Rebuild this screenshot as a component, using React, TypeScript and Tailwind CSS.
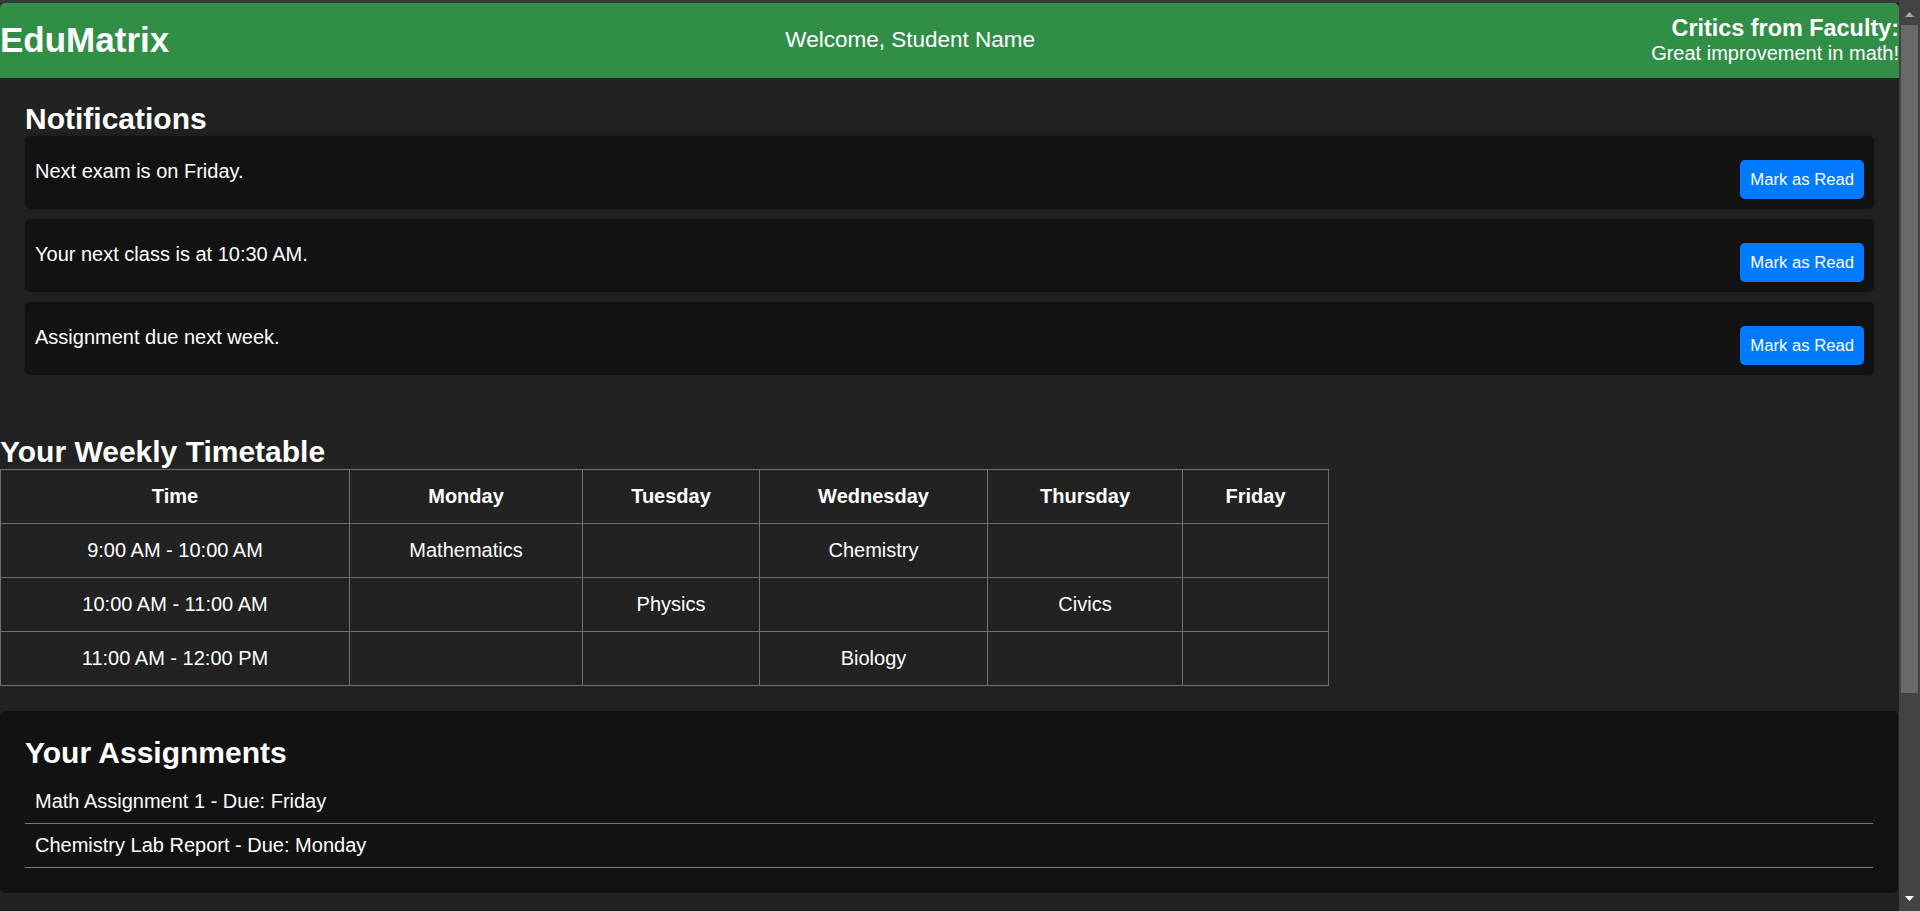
import React from 'react';

const NOTIFICATIONS = ['Next exam is on Friday.', 'Your next class is at 10:30 AM.', 'Assignment due next week.'];

const DAYS = ['Monday', 'Tuesday', 'Wednesday', 'Thursday', 'Friday'];

const ROWS = [
  { time: '9:00 AM - 10:00 AM', cells: ['Mathematics', '', 'Chemistry', '', ''] },
  { time: '10:00 AM - 11:00 AM', cells: ['', 'Physics', '', 'Civics', ''] },
  { time: '11:00 AM - 12:00 PM', cells: ['', '', 'Biology', '', ''] },
];

const ASSIGNMENTS = ['Math Assignment 1 - Due: Friday', 'Chemistry Lab Report - Due: Monday'];

function Scrollbar() {
  return (
    <div className="flex w-[21px] shrink-0 flex-col bg-[#434343]">
      <div className="flex h-[25px] items-center justify-center pt-[4px]">
        <svg width="9" height="5" viewBox="0 0 9 5">
          <path d="M0 5 L4.5 0 L9 5 Z" fill="#a8a8a8" />
        </svg>
      </div>
      <div className="mx-[2px] h-[668px] bg-[#696969]" />
      <div className="flex-1" />
      <div className="flex h-[22px] items-center justify-center pb-[4px]">
        <svg width="9" height="5" viewBox="0 0 9 5">
          <path d="M0 0 L9 0 L4.5 5 Z" fill="#ffffff" />
        </svg>
      </div>
    </div>
  );
}

export default function App() {
  return (
    <div className="flex h-[911px] w-[1920px] overflow-hidden bg-[#222222] font-['Liberation_Sans',Arial,sans-serif] leading-[1.15] text-white">
      <div className="flex min-w-0 flex-1 flex-col">
        <div className="h-[3px] shrink-0 bg-[#393939]" />

        {/* header */}
        <header className="flex items-center justify-between rounded-t-[5px] bg-[#318e47] py-[12.4px]">
          <h1 className="text-[35px] font-bold">EduMatrix</h1>
          <p className="text-[22.5px]">Welcome, Student Name</p>
          <div className="text-right">
            <h3 className="text-[23.4px] font-bold">Critics from Faculty:</h3>
            <p className="text-[20px]">Great improvement in math!</p>
          </div>
        </header>

        {/* notifications */}
        <section className="px-[25px] pt-[24px] pb-[25px]">
          <h2 className="text-[30px] font-bold">Notifications</h2>
          <div className="flex flex-col gap-[10.4px]">
            {NOTIFICATIONS.map((n) => (
              <div
                key={n}
                className="flex items-start justify-between rounded-[5px] bg-[#121212] px-[10px] pt-[23.4px] pb-[10px] shadow-[0_0_6px_rgba(0,0,0,0.25)]"
              >
                <p className="text-[20px]">{n}</p>
                <button className="rounded-[5px] bg-[#007bff] px-[10px] py-[10px] text-[16.67px] leading-[19.2px] text-white">
                  Mark as Read
                </button>
              </div>
            ))}
          </div>
        </section>

        {/* timetable */}
        <section className="mt-[35px]">
          <h2 className="text-[30px] font-bold">Your Weekly Timetable</h2>
          <table className="w-[1328px] table-fixed border-collapse text-[20px]">
            <colgroup>
              <col className="w-[349px]" />
              <col className="w-[233px]" />
              <col className="w-[177px]" />
              <col className="w-[228px]" />
              <col className="w-[195px]" />
              <col className="w-[146px]" />
            </colgroup>
            <thead>
              <tr>
                <th className="border border-[#707070] py-[15px] text-center font-bold leading-[23px]">Time</th>
                {DAYS.map((d) => (
                  <th key={d} className="border border-[#707070] py-[15px] text-center font-bold leading-[23px]">
                    {d}
                  </th>
                ))}
              </tr>
            </thead>
            <tbody>
              {ROWS.map((r) => (
                <tr key={r.time}>
                  <td className="border border-[#707070] py-[15px] text-center leading-[23px]">{r.time}</td>
                  {r.cells.map((c, i) => (
                    <td key={i} className="border border-[#707070] py-[15px] text-center leading-[23px]">
                      {c}
                    </td>
                  ))}
                </tr>
              ))}
            </tbody>
          </table>
        </section>

        {/* assignments */}
        <section className="mt-[25px] mr-[1px] rounded-[5px] bg-[#121212] px-[25px] pt-[24.4px] pb-[25px]">
          <h2 className="mb-[10px] text-[30px] font-bold">Your Assignments</h2>
          <ul>
            {ASSIGNMENTS.map((a) => (
              <li key={a} className="border-b border-[#777777] px-[10px] py-[10px] text-[20px] leading-[23px]">
                {a}
              </li>
            ))}
          </ul>
        </section>
      </div>
      <Scrollbar />
    </div>
  );
}
